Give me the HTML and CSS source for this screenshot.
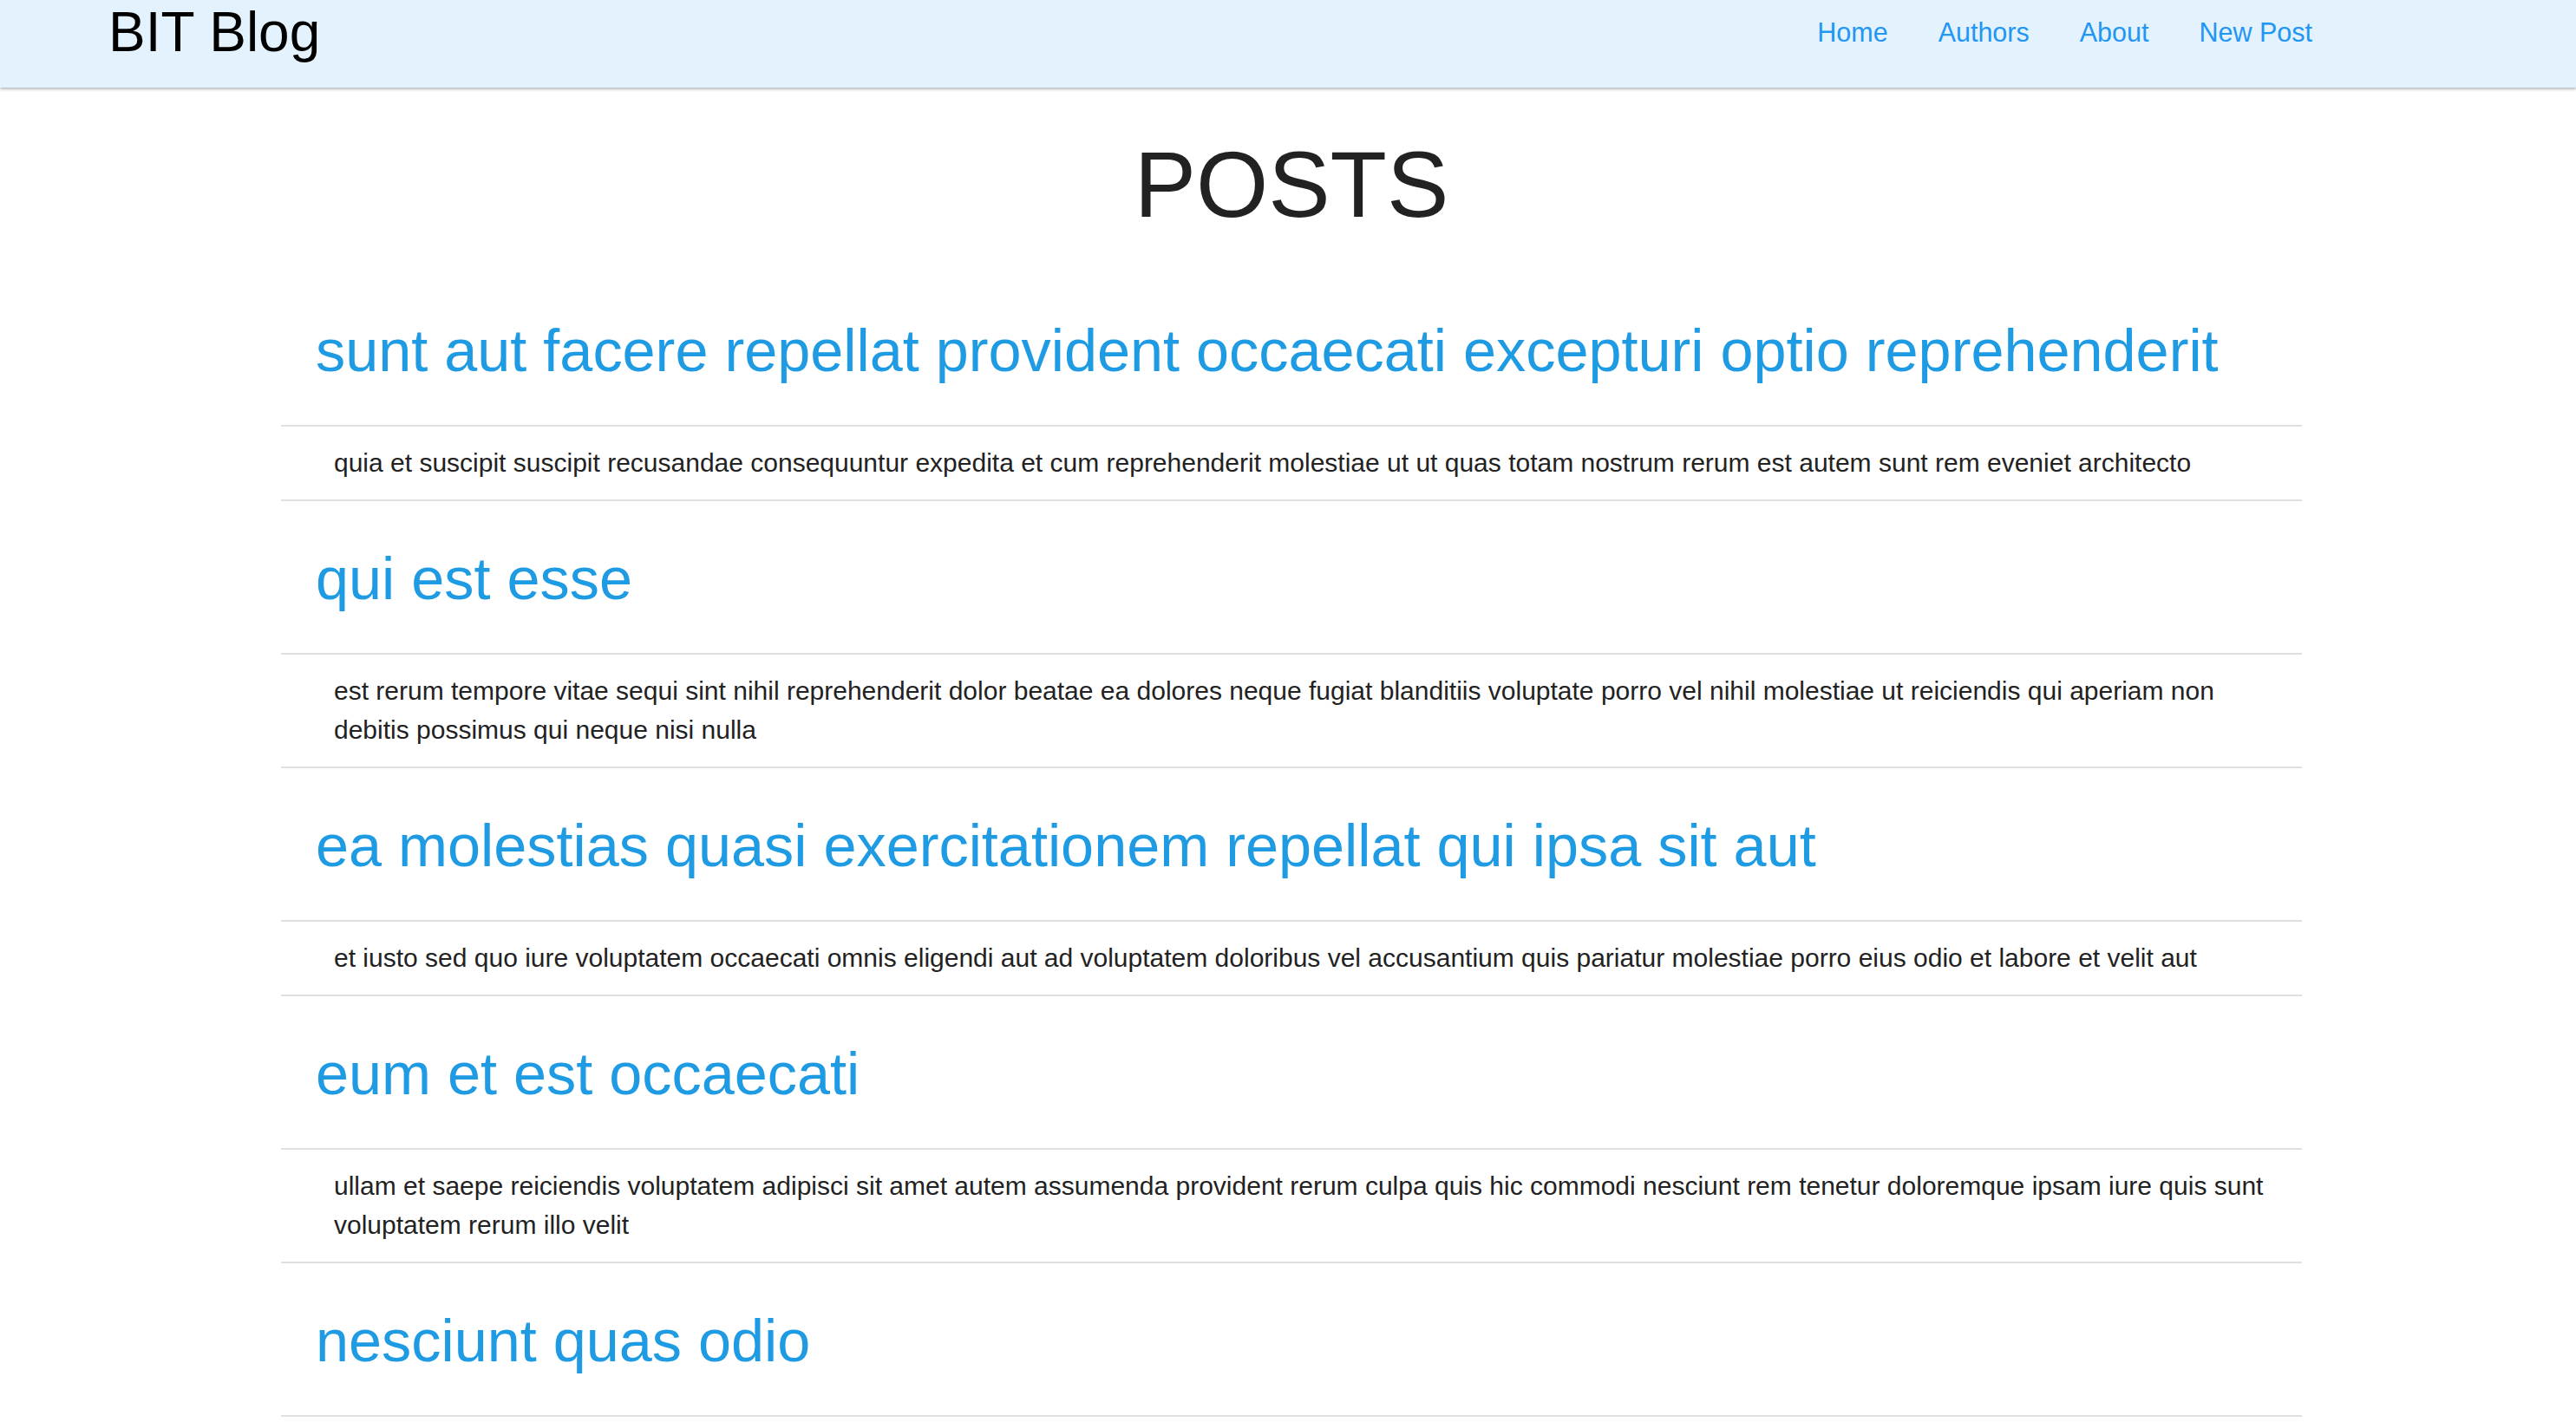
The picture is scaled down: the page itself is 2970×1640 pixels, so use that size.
FILE: index.html
```html
<!DOCTYPE html>
<html lang="en">
<head>
<meta charset="utf-8">
<title>BIT Blog</title>
<link rel="stylesheet" href="styles.css">
</head>
<body>
<header class="navbar">
  <a class="brand" href="#">BIT Blog</a>
  <nav>
    <ul class="nav-links">
      <li><a href="#">Home</a></li>
      <li><a href="#">Authors</a></li>
      <li><a href="#">About</a></li>
      <li><a href="#">New Post</a></li>
    </ul>
  </nav>
</header>
<main class="content">
  <div class="posts">
    <h1 class="page-title">POSTS</h1>
    <ul class="post-list">
      <li class="post-title"><a href="#">sunt aut facere repellat provident occaecati excepturi optio reprehenderit</a></li>
      <li class="post-body"><p>quia et suscipit suscipit recusandae consequuntur expedita et cum reprehenderit molestiae ut ut quas totam nostrum rerum est autem sunt rem eveniet architecto</p></li>
      <li class="post-title"><a href="#">qui est esse</a></li>
      <li class="post-body"><p>est rerum tempore vitae sequi sint nihil reprehenderit dolor beatae ea dolores neque fugiat blanditiis voluptate porro vel nihil molestiae ut reiciendis qui aperiam non debitis possimus qui neque nisi nulla</p></li>
      <li class="post-title"><a href="#">ea molestias quasi exercitationem repellat qui ipsa sit aut</a></li>
      <li class="post-body"><p>et iusto sed quo iure voluptatem occaecati omnis eligendi aut ad voluptatem doloribus vel accusantium quis pariatur molestiae porro eius odio et labore et velit aut</p></li>
      <li class="post-title"><a href="#">eum et est occaecati</a></li>
      <li class="post-body"><p>ullam et saepe reiciendis voluptatem adipisci sit amet autem assumenda provident rerum culpa quis hic commodi nesciunt rem tenetur doloremque ipsam iure quis sunt voluptatem rerum illo velit</p></li>
      <li class="post-title"><a href="#">nesciunt quas odio</a></li>
    </ul>
  </div>
</main>
</body>
</html>
```

FILE: styles.css
```css
* {
  box-sizing: border-box;
}

html, body {
  margin: 0;
  padding: 0;
  background: #ffffff;
  font-family: "Liberation Sans", Arial, Helvetica, sans-serif;
  color: #222222;
}

a {
  text-decoration: none;
}

.navbar {
  height: 101px;
  background: #e3f2fd;
  display: flex;
  align-items: flex-start;
  justify-content: space-between;
  padding: 0 275px 0 125px;
  box-shadow: 0 2px 3px rgba(0, 0, 0, 0.28);
  position: relative;
}

.brand {
  font-size: 64px;
  line-height: 74px;
  color: #000000;
}

.nav-links {
  list-style: none;
  margin: 0;
  padding: 0;
  display: flex;
}

.nav-links a {
  display: block;
  font-size: 30.5px;
  line-height: 74px;
  padding: 0 29px;
  color: #2196f3;
}

.content {
  width: 2338px;
  margin: 0 auto;
  padding-left: 8px;
}

.page-title {
  margin: 48px 0 38px;
  text-align: center;
  font-size: 107px;
  line-height: 128px;
  font-weight: normal;
  color: #222222;
}

.post-list {
  list-style: none;
  margin: 0;
  padding: 0;
}

.post-list li {
  border-bottom: 2px solid #e0e0e0;
}

.post-title {
  padding: 52px 40px 48px;
}

.post-title a {
  display: block;
  font-size: 68.4px;
  line-height: 75px;
  color: #1e9be3;
}

.post-body {
  padding: 19px 40px 20px 61px;
}

.post-body p {
  margin: 0;
  font-size: 30px;
  line-height: 45px;
  color: #222222;
}
```
